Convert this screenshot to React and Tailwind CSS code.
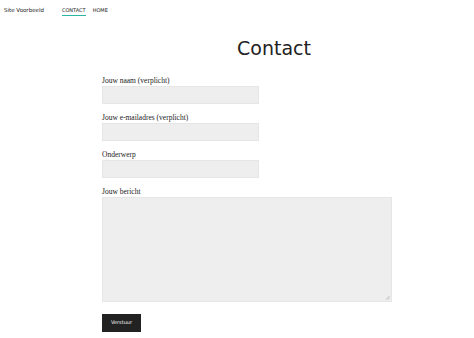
export default function App() {
  const sans = { fontFamily: '"DejaVu Sans", sans-serif' };
  const serif = { fontFamily: '"Liberation Serif", serif' };
  return (
    <div className="w-[474px] h-[338px] bg-white overflow-hidden text-[#222]">
      <header className="flex items-start h-[22px] pt-[6px] pl-[4px]" style={sans}>
        <div className="text-[5.5px] leading-[8px] text-[#222]">Site Voorbeeld</div>
        <nav className="flex gap-[7px] ml-[18px] text-[5px] leading-[8px]">
          <span className="border-b border-[#2ab5a5] pb-[1px]">CONTACT</span>
          <span>HOME</span>
        </nav>
      </header>
      <h1 className="text-[19px] leading-[24px] pl-[237px] mt-[14px] text-[#222]" style={sans}>Contact</h1>
      <form className="flex flex-col pl-[102px] mt-[16px]" style={serif}>
        <label className="text-[7.5px] leading-[9px] text-[#222] mb-[1px]">Jouw naam (verplicht)</label>
        <div className="w-[157px] h-[18px] bg-[#eeeeee] border border-[#e6e6e6]" />
        <label className="text-[7.5px] leading-[9px] text-[#222] mb-[1px] mt-[9px]">Jouw e-mailadres (verplicht)</label>
        <div className="w-[157px] h-[18px] bg-[#eeeeee] border border-[#e6e6e6]" />
        <label className="text-[7.5px] leading-[9px] text-[#222] mb-[1px] mt-[9px]">Onderwerp</label>
        <div className="w-[157px] h-[18px] bg-[#eeeeee] border border-[#e6e6e6]" />
        <label className="text-[7.5px] leading-[9px] text-[#222] mb-[1px] mt-[9px]">Jouw bericht</label>
        <div className="relative w-[290px] h-[105px] bg-[#eeeeee] border border-[#e6e6e6]">
          <svg className="absolute right-[1px] bottom-[1px]" width="5" height="5" viewBox="0 0 5 5">
            <path d="M4.5 1 L1 4.5 M4.5 3 L3 4.5" stroke="#999" strokeWidth="0.6" />
          </svg>
        </div>
        <div className="mt-[12px]">
          <div className="w-[39px] h-[18px] bg-[#222] flex items-center justify-center text-white text-[5px]" style={sans}>Verstuur</div>
        </div>
      </form>
    </div>
  );
}
